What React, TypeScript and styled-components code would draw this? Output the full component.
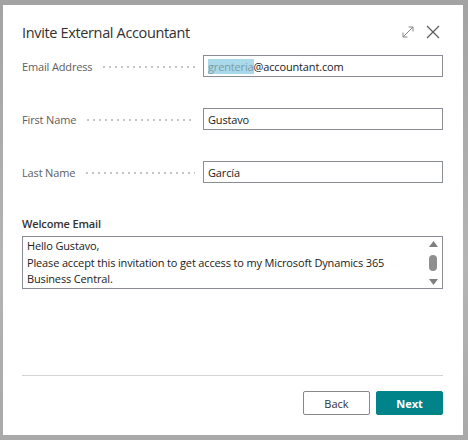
import styled, { createGlobalStyle } from "styled-components";

const GlobalStyle = createGlobalStyle`
  html, body {
    margin: 0;
    padding: 0;
  }
  body {
    width: 468px;
    height: 440px;
    overflow: hidden;
    background: linear-gradient(180deg, #a3a3a3 0%, #b4b4b4 60%, #a9a9a9 100%);
    font-family: "Segoe UI", "Open Sans", "Noto Sans", sans-serif;
  }
`;

const Dialog = styled.div`
  box-sizing: border-box;
  width: 460px;
  height: 430px;
  margin: 5px 0 0 3px;
  background: #fff;
  padding: 15px 20px 20px 19px;
  display: flex;
  flex-direction: column;
  color: #333;
`;

const Header = styled.div`
  display: flex;
  align-items: center;
  justify-content: space-between;
  height: 24px;
`;

const Title = styled.h1`
  margin: 0;
  font-size: 14.5px;
  font-weight: 400;
  color: #323130;
  letter-spacing: -0.35px;
`;

const HeaderIcons = styled.div`
  display: flex;
  align-items: center;
  gap: 11px;
  margin-right: 3px;
`;

const IconButton = styled.span`
  display: flex;
  width: 14px;
  height: 14px;
`;

const Fields = styled.div`
  display: flex;
  flex-direction: column;
  gap: 31px;
  margin-top: 11px;
`;

const Row = styled.div`
  display: flex;
  align-items: center;
  height: 22px;
`;

const Label = styled.div`
  width: 181px;
  display: flex;
  align-items: center;
  font-size: 11px;
  letter-spacing: -0.15px;
  color: #605e5c;
  white-space: nowrap;

  &:after {
    content: "";
    flex: 1;
    height: 2px;
    margin: 1px 8px 0 9px;
    background-image: radial-gradient(circle, #c8c6c4 0.8px, transparent 1px);
    background-size: 6px 2px;
    background-repeat: repeat-x;
  }
`;

const Input = styled.div`
  flex: 1;
  box-sizing: border-box;
  height: 22px;
  border: 1px solid #8a8d96;
  padding: 0 4px;
  display: flex;
  align-items: center;
  font-size: 11px;
  letter-spacing: -0.15px;
  color: #212121;
`;

const Selected = styled.span`
  background: #a9d9ea;
  color: #7d9ba5;
`;

const Section = styled.div`
  margin-top: 33px;
  display: flex;
  flex-direction: column;
`;

const SectionLabel = styled.div`
  font-size: 11px;
  font-weight: 600;
  letter-spacing: -0.15px;
  color: #323130;
  margin-bottom: 5px;
`;

const TextBox = styled.div`
  box-sizing: border-box;
  height: 53px;
  border: 1px solid #8a8d96;
  display: flex;
  padding: 1px 3px 1px 4px;
`;

const TextContent = styled.div`
  flex: 1;
  font-size: 11px;
  letter-spacing: -0.15px;
  line-height: 16.5px;
  color: #212121;
`;

const Scrollbar = styled.div`
  width: 12px;
  display: flex;
  flex-direction: column;
  align-items: center;
  justify-content: space-between;
  padding: 3px 0 2px;
`;

const Thumb = styled.div`
  width: 8px;
  height: 16px;
  border-radius: 4px;
  background: #8f8f8f;
`;

const Spacer = styled.div`
  flex: 1;
`;

const Footer = styled.div`
  border-top: 1px solid #d4d4d4;
  padding-top: 15px;
  display: flex;
  justify-content: flex-end;
  gap: 6px;
`;

const Button = styled.button<{ $primary?: boolean }>`
  box-sizing: border-box;
  width: 67px;
  height: 24px;
  font-family: inherit;
  font-size: 11px;
  font-weight: ${(p) => (p.$primary ? 700 : 400)};
  border: 1px solid ${(p) => (p.$primary ? "#008489" : "#8a8886")};
  background: ${(p) => (p.$primary ? "#008489" : "#fff")};
  color: ${(p) => (p.$primary ? "#fff" : "#323130")};
  border-radius: 2px;
  padding: 0;
`;

function ExpandIcon() {
  return (
    <svg width="14" height="14" viewBox="0 0 14 14" fill="none" stroke="#8a8886" strokeWidth="1">
      <path d="M2 12 L12 2" />
      <path d="M7.5 2 H12 V6.5" />
      <path d="M2 7.5 V12 H6.5" />
    </svg>
  );
}

function CloseIcon() {
  return (
    <svg width="14" height="14" viewBox="0 0 14 14" fill="none" stroke="#605e5c" strokeWidth="1.2">
      <path d="M1 1 L13 13" />
      <path d="M13 1 L1 13" />
    </svg>
  );
}

function Arrow({ up }: { up?: boolean }) {
  return (
    <svg width="9" height="6" viewBox="0 0 9 6">
      <path d={up ? "M0 6 L4.5 0 L9 6 Z" : "M0 0 L4.5 6 L9 0 Z"} fill="#7f7f7f" />
    </svg>
  );
}

export default function App() {
  return (
    <>
      <GlobalStyle />
      <Dialog>
        <Header>
          <Title>Invite External Accountant</Title>
          <HeaderIcons>
            <IconButton>
              <ExpandIcon />
            </IconButton>
            <IconButton>
              <CloseIcon />
            </IconButton>
          </HeaderIcons>
        </Header>

        <Fields>
          <Row>
            <Label>Email Address</Label>
            <Input>
              <Selected>grenteria</Selected>@accountant.com
            </Input>
          </Row>
          <Row>
            <Label>First Name</Label>
            <Input>Gustavo</Input>
          </Row>
          <Row>
            <Label>Last Name</Label>
            <Input>García</Input>
          </Row>
        </Fields>

        <Section>
          <SectionLabel>Welcome Email</SectionLabel>
          <TextBox>
            <TextContent>
              Hello Gustavo,
              <br />
              Please accept this invitation to get access to my Microsoft Dynamics 365 Business Central.
            </TextContent>
            <Scrollbar>
              <Arrow up />
              <Thumb />
              <Arrow />
            </Scrollbar>
          </TextBox>
        </Section>

        <Spacer />

        <Footer>
          <Button>Back</Button>
          <Button $primary>Next</Button>
        </Footer>
      </Dialog>
    </>
  );
}
